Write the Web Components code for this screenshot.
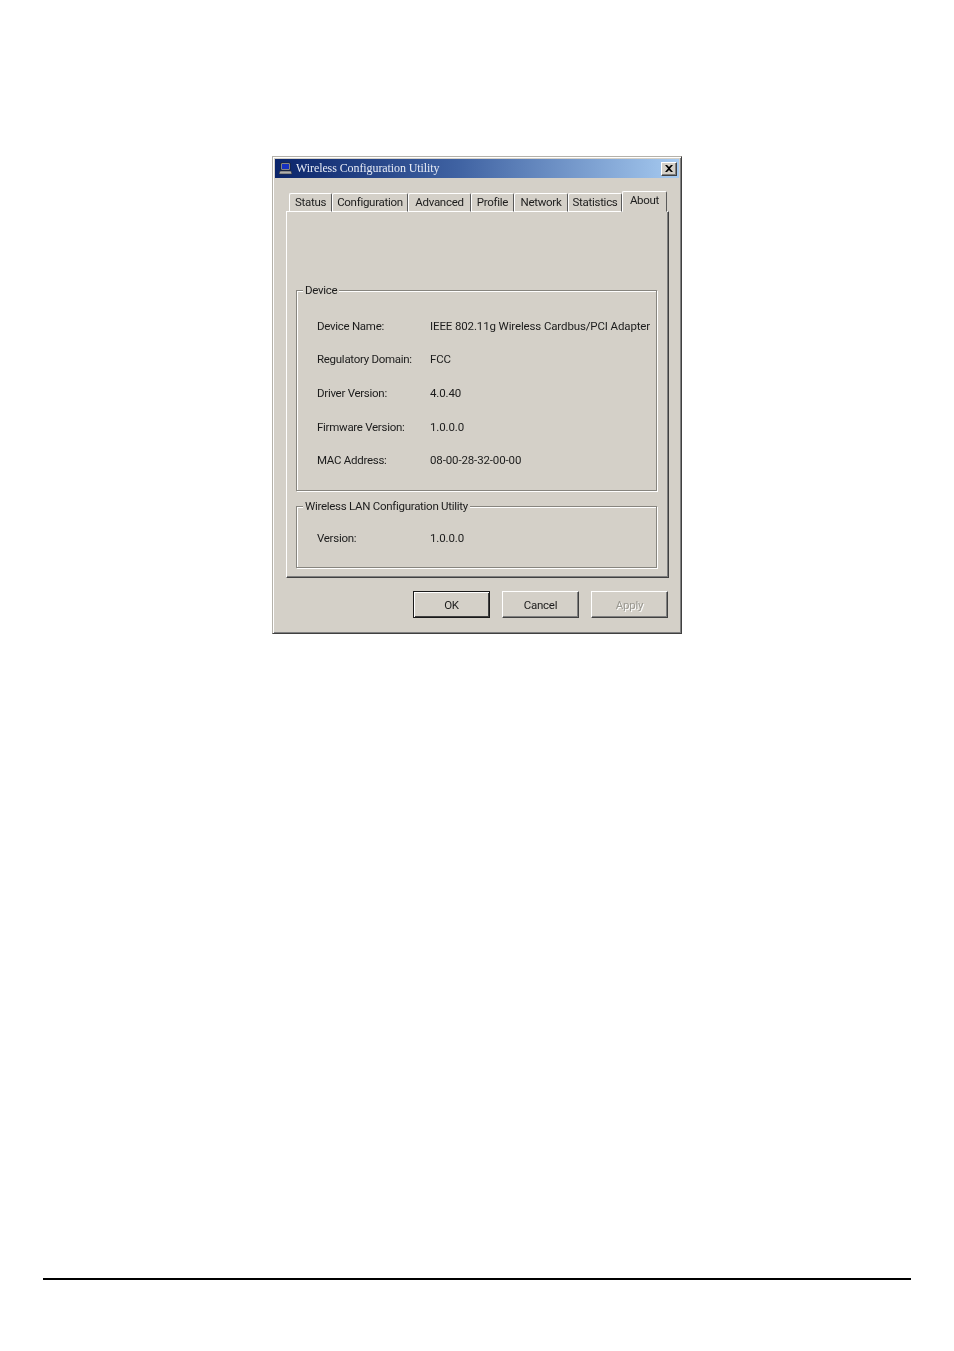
<!DOCTYPE html>
<html>
<head>
<meta charset="utf-8">
<title>Wireless Configuration Utility</title>
<style>
html, body { margin: 0; background: #fff; }
body { width: 954px; height: 1351px; overflow: hidden; font-family: "Liberation Sans", Arial, sans-serif; }
</style>
</head>
<body>
<manual-page>
  <wl-window>
    <wl-titlebar slot="title">Wireless Configuration Utility</wl-titlebar>
    <wl-tabs slot="tabs">
      <wl-tab w="43">Status</wl-tab>
      <wl-tab w="76">Configuration</wl-tab>
      <wl-tab w="63">Advanced</wl-tab>
      <wl-tab w="43">Profile</wl-tab>
      <wl-tab w="54">Network</wl-tab>
      <wl-tab w="54">Statistics</wl-tab>
      <wl-tab w="45" active>About</wl-tab>
    </wl-tabs>
    <wl-group slot="pane" legend="Device" style="height:208px;margin-top:71px">
      <wl-row label="Device Name:">IEEE 802.11g Wireless Cardbus/PCI Adapter</wl-row>
      <wl-row label="Regulatory Domain:">FCC</wl-row>
      <wl-row label="Driver Version:">4.0.40</wl-row>
      <wl-row label="Firmware Version:">1.0.0.0</wl-row>
      <wl-row label="MAC Address:">08-00-28-32-00-00</wl-row>
    </wl-group>
    <wl-group slot="pane" legend="Wireless LAN Configuration Utility" style="height:69px;margin-top:8px" compact>
      <wl-row label="Version:">1.0.0.0</wl-row>
    </wl-group>
    <wl-button slot="buttons" default>OK</wl-button>
    <wl-button slot="buttons">Cancel</wl-button>
    <wl-button slot="buttons" disabled>Apply</wl-button>
  </wl-window>
</manual-page>

<script>
function shadow(el, html) {
  el.attachShadow({ mode: 'open' }).innerHTML = html;
}

class ManualPage extends HTMLElement {
  constructor() {
    super();
    shadow(this, `
<style>
:host { display: block; padding: 156px 43px 0 43px; }
.shot { display: flex; justify-content: flex-start; padding-left: 229px; height: 1122px; }
.rule { height: 2px; background: #000; width: 868px; }
</style>
<div class="shot"><slot></slot></div>
<div class="rule"></div>`);
  }
}

class WlWindow extends HTMLElement {
  constructor() {
    super();
    shadow(this, `
<style>
:host { display: block; width: 410px; height: 478px; box-sizing: border-box; background: #d4d0c8;
  border: 1px solid; border-color: #b4b1aa #404040 #404040 #b4b1aa; padding: 2px; filter: blur(.3px);
  box-shadow: inset 1px 1px 0 #fff, inset -1px -1px 0 #808080; color: #1c1c1c;
  font: 11.5px Roboto, "Liberation Sans", Arial, sans-serif; letter-spacing: -.28px; }
.body { padding: 0 10px 0 11px; }
.pane { height: 367px; box-sizing: border-box; padding: 0 11px 0 8px; background: #d4d0c8;
  border: 1px solid; border-color: #fff #404040 #404040 #fff; box-shadow: inset -1px -1px 0 #808080; }
.buttons { display: flex; justify-content: flex-end; gap: 12px; margin: 13px 1px 0 0; }
</style>
<slot name="title"></slot>
<div class="body">
  <slot name="tabs"></slot>
  <div class="pane"><slot name="pane"></slot></div>
  <div class="buttons"><slot name="buttons"></slot></div>
</div>`);
  }
}

class WlTitlebar extends HTMLElement {
  constructor() {
    super();
    shadow(this, `
<style>
:host { display: flex; align-items: center; height: 19px; padding: 0 2px 0 4px; color: #e8ecf6; letter-spacing: -.09px;
  background: linear-gradient(90deg, #0a246a 0%, #3f62a2 45%, #a6caf0 100%);
  font: 12px "Liberation Serif", "Times New Roman", serif; }
svg { flex: none; margin-right: 4px; }
.text { flex: 1; white-space: nowrap; }
.close { width: 16px; height: 14px; box-sizing: border-box; background: #d4d0c8; display: flex; align-items: center; justify-content: center;
  border: 1px solid; border-color: #fff #404040 #404040 #fff; box-shadow: inset -1px -1px 0 #808080; }
</style>
<svg width="13" height="13" viewBox="0 0 13 13">
  <path d="M2 1h9v7H2z" fill="#c8c8c8" stroke="#202020" stroke-width=".8"/>
  <path d="M3 2h7v5H3z" fill="#1630c0"/>
  <path d="M1 9h11l1 3H0z" fill="#b0b0b0" stroke="#303030" stroke-width=".6"/>
</svg>
<span class="text"><slot></slot></span>
<span class="close">
  <svg width="8" height="7" viewBox="0 0 8 7" style="margin:0"><path d="M0 0h2l2 2 2-2h2L5 3.500 8 7H6L4 5 2 7H0l3-3.500z" fill="#000"/></svg>
</span>`);
  }
}

class WlTabs extends HTMLElement {
  constructor() {
    super();
    shadow(this, `
<style>
:host { display: flex; align-items: flex-end; height: 34px; padding-left: 3px; position: relative; z-index: 1; margin-bottom: -1px; }
</style>
<slot></slot>`);
  }
}

class WlTab extends HTMLElement {
  constructor() {
    super();
    shadow(this, `
<style>
:host { display: flex; align-items: center; justify-content: center; box-sizing: border-box; height: 19px; background: #d4d0c8; padding-bottom: 1px;
  border: 1px solid; border-color: #fff #5a5a5a #fff #fff; border-radius: 2px 2px 0 0; white-space: nowrap; }
:host([active]) { height: 21px; border-bottom-color: #d4d0c8; padding-bottom: 3px; }
</style>
<slot></slot>`);
    this.style.width = this.getAttribute('w') + 'px';
  }
}

class WlGroup extends HTMLElement {
  constructor() {
    super();
    const compact = this.hasAttribute('compact');
    shadow(this, `
<style>
:host { display: block; box-sizing: border-box; }
fieldset { box-sizing: border-box; height: 100%; min-width: 0; margin: 0 0 0 1px; padding: 0; border: 1px solid #87857f;
  box-shadow: 1px 1px 0 #fff, inset 1px 1px 0 #fff; }
legend { padding: 0 2px; margin-left: 6px; line-height: 14px; background: #d4d0c8; }
.rows { padding: ${compact ? '8px' : '12px'} 0 0 20px; }
</style>
<fieldset><legend>${this.getAttribute('legend')}</legend><div class="rows"><slot></slot></div></fieldset>`);
  }
}

class WlRow extends HTMLElement {
  constructor() {
    super();
    shadow(this, `
<style>
:host { display: flex; align-items: center; height: 33.6px; white-space: nowrap; }
.label { width: 113px; flex: none; }
.value { letter-spacing: -.13px; }
</style>
<span class="label">${this.getAttribute('label')}</span><span class="value"><slot></slot></span>`);
  }
}

class WlButton extends HTMLElement {
  constructor() {
    super();
    shadow(this, `
<style>
:host { display: flex; align-items: center; justify-content: center; box-sizing: border-box; width: 77px; height: 27px; background: #d4d0c8;
  border: 1px solid; border-color: #fff #404040 #404040 #fff; box-shadow: inset -1px -1px 0 #808080; }
:host([default]) { border-color: #1a1a1a; box-shadow: inset 1px 1px 0 #fff, inset -1px -1px 0 #404040; }
:host([disabled]) { color: #9a9890; text-shadow: 1px 1px 0 #fff; }
</style>
<slot></slot>`);
  }
}

customElements.define('manual-page', ManualPage);
customElements.define('wl-window', WlWindow);
customElements.define('wl-titlebar', WlTitlebar);
customElements.define('wl-tabs', WlTabs);
customElements.define('wl-tab', WlTab);
customElements.define('wl-group', WlGroup);
customElements.define('wl-row', WlRow);
customElements.define('wl-button', WlButton);
</script>
</body>
</html>
